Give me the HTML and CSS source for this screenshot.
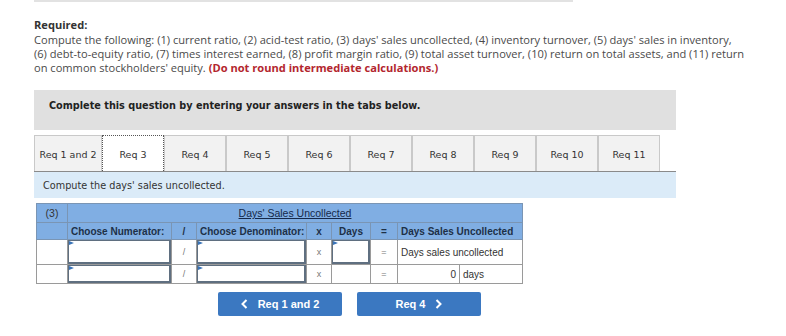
FILE: index.html
```html
<!DOCTYPE html>
<html lang="en">
<head>
  <meta charset="UTF-8" />
  <title>Req 3</title>
  <link rel="stylesheet" href="styles.css">
</head>
<body>
  <div class="page">
    <div class="topline"></div>

    <div class="required">
      <strong class="req-title">Required:</strong>
      Compute the following: (1) current ratio, (2) acid-test ratio, (3) days' sales uncollected, (4) inventory turnover, (5) days' sales in inventory,<br>
      (6) debt-to-equity ratio, (7) times interest earned, (8) profit margin ratio, (9) total asset turnover, (10) return on total assets, and (11) return<br>
      on common stockholders' equity. <span class="warn">(Do not round intermediate calculations.)</span>
    </div>

    <div class="tabs-box">
      <div class="box-head">Complete this question by entering your answers in the tabs below.</div>

      <div class="tabs">
        <a href="#" class="tab">Req 1 and 2</a>
        <a href="#" class="tab active">Req 3</a>
        <a href="#" class="tab">Req 4</a>
        <a href="#" class="tab">Req 5</a>
        <a href="#" class="tab">Req 6</a>
        <a href="#" class="tab">Req 7</a>
        <a href="#" class="tab">Req 8</a>
        <a href="#" class="tab">Req 9</a>
        <a href="#" class="tab">Req 10</a>
        <a href="#" class="tab">Req 11</a>
      </div>
      <div class="tab-desc">Compute the days' sales uncollected.</div>

      <table class="calc">
        <colgroup>
          <col style="width:31px">
          <col style="width:104px">
          <col style="width:25px">
          <col style="width:110px">
          <col style="width:25px">
          <col style="width:39px">
          <col style="width:27px">
          <col style="width:62px">
          <col style="width:63px">
        </colgroup>
        <tr class="head1">
          <th>(3)</th>
          <th colspan="8"><u>Days' Sales Uncollected</u></th>
        </tr>
        <tr class="head2">
          <th></th>
          <th class="left">Choose Numerator:</th>
          <th>/</th>
          <th class="left">Choose Denominator:</th>
          <th>x</th>
          <th>Days</th>
          <th>=</th>
          <th class="left" colspan="2">Days Sales Uncollected</th>
        </tr>
        <tr class="row1">
          <td></td>
          <td class="inp"><input type="text"></td>
          <td class="op">/</td>
          <td class="inp"><input type="text"></td>
          <td class="op">x</td>
          <td class="inp"><input type="text"></td>
          <td class="op">=</td>
          <td class="left" colspan="2">Days sales uncollected</td>
        </tr>
        <tr class="row2">
          <td></td>
          <td class="inp"><input type="text"></td>
          <td class="op">/</td>
          <td class="inp"><input type="text"></td>
          <td class="op">x</td>
          <td></td>
          <td class="op">=</td>
          <td class="result">0</td>
          <td class="unit">days</td>
        </tr>
      </table>

      <div class="nav-buttons">
        <button class="btn">
          <svg class="chev" width="7" height="10" viewBox="0 0 7 10"><polyline points="5.5,1 1.5,5 5.5,9" fill="none" stroke="#fff" stroke-width="2"/></svg>
          Req 1 and 2
        </button>
        <button class="btn">
          Req 4
          <svg class="chev" width="7" height="10" viewBox="0 0 7 10"><polyline points="1.5,1 5.5,5 1.5,9" fill="none" stroke="#fff" stroke-width="2"/></svg>
        </button>
      </div>
    </div>
  </div>
</body>
</html>
```

FILE: styles.css
```css
body {
  margin: 0;
  padding: 0;
  background-color: #fff;
  color: #333;
}
.page {
  padding-left: 34px;
}
.topline {
  width: 539px;
  height: 2px;
  background-color: #e2e2e2;
}
.required {
  margin-top: 16px;
  font-family: "Open Sans", sans-serif;
  font-size: 11.1px;
  line-height: 14px;
  color: #4a4a4a;
  white-space: nowrap;
}
.req-title {
  display: block;
  margin-bottom: 1px;
  color: #333;
}
.warn {
  color: #b3262e;
  font-weight: bold;
}
.tabs-box {
  width: 642px;
  margin-top: 15px;
}
.box-head {
  height: 40px;
  line-height: 32px;
  padding-left: 15px;
  background-color: #e0e0e0;
  font-family: "DejaVu Sans", Verdana, sans-serif;
  font-size: 9.7px;
  font-weight: bold;
  color: #222;
}
.tabs {
  display: flex;
  margin-top: 5px;
  border-bottom: 1px solid #8a8a8a;
}
.tab {
  box-sizing: border-box;
  width: 62px;
  height: 36px;
  line-height: 38px;
  text-align: center;
  background-color: #f2f2f2;
  border: 1px solid #c9c9c9;
  border-bottom: none;
  font-family: "DejaVu Sans", Verdana, sans-serif;
  font-size: 9.5px;
  color: #333;
  text-decoration: none;
}
.tab:first-child {
  width: 68px;
}
.tab.active {
  background-color: #fff;
  border: 1px dotted #555;
  border-bottom: none;
}
.tab-desc {
  height: 26px;
  line-height: 27px;
  padding-left: 9px;
  background-color: #dbebf8;
  font-family: "DejaVu Sans", Verdana, sans-serif;
  font-size: 9.7px;
  color: #333;
}
.calc {
  margin: 5px 0 0 2px;
  width: 486px;
  table-layout: fixed;
  border-collapse: collapse;
  border: 1px solid #7c8895;
  font-family: "Liberation Sans", Arial, sans-serif;
  font-size: 10px;
  white-space: nowrap;
}
.calc th {
  background-color: #80aee3;
  color: #1d3047;
  font-weight: bold;
  border: 1px solid #7a95b4;
  padding: 0 3px;
  text-align: center;
}
.calc .head1 th {
  height: 18px;
  font-size: 10.5px;
  font-weight: normal;
  color: #15294a;
}
.calc .head1 th:first-child {
  color: #333;
}
.calc .head2 th {
  height: 16px;
}
.calc .left {
  text-align: left;
}
.calc td {
  border: 1px solid #9a9a9a;
  padding: 0 3px;
  color: #333;
}
.calc .row1 td {
  height: 24px;
}
.calc .row2 td {
  height: 18px;
}
.calc td.op {
  text-align: center;
  color: #777;
  font-size: 9px;
}
.calc td.inp {
  padding: 0;
  position: relative;
}
.calc td.inp::before {
  content: "";
  position: absolute;
  left: 1px;
  top: 1px;
  border-left: 5px solid #3a74b8;
  border-top: 2px solid transparent;
  border-bottom: 2px solid transparent;
}
.calc input {
  box-sizing: border-box;
  display: block;
  width: 100%;
  margin: 0;
  border: 1px solid #5f6f80;
  border-width: 1px 2px 2px 1px;
  background: #fff;
}
.calc .row1 input {
  height: 24px;
}
.calc .row2 input {
  height: 18px;
}
.calc td.result {
  text-align: right;
}
.calc td.unit {
  text-align: left;
}
.nav-buttons {
  display: flex;
  gap: 15px;
  margin: 8px 0 0 184px;
}
.btn {
  display: flex;
  align-items: center;
  justify-content: center;
  gap: 10px;
  width: 124px;
  height: 24px;
  background-color: #3b78c1;
  color: #fff;
  border: none;
  border-radius: 2px;
  font-family: "Liberation Sans", Arial, sans-serif;
  font-size: 11px;
  font-weight: bold;
}
```
